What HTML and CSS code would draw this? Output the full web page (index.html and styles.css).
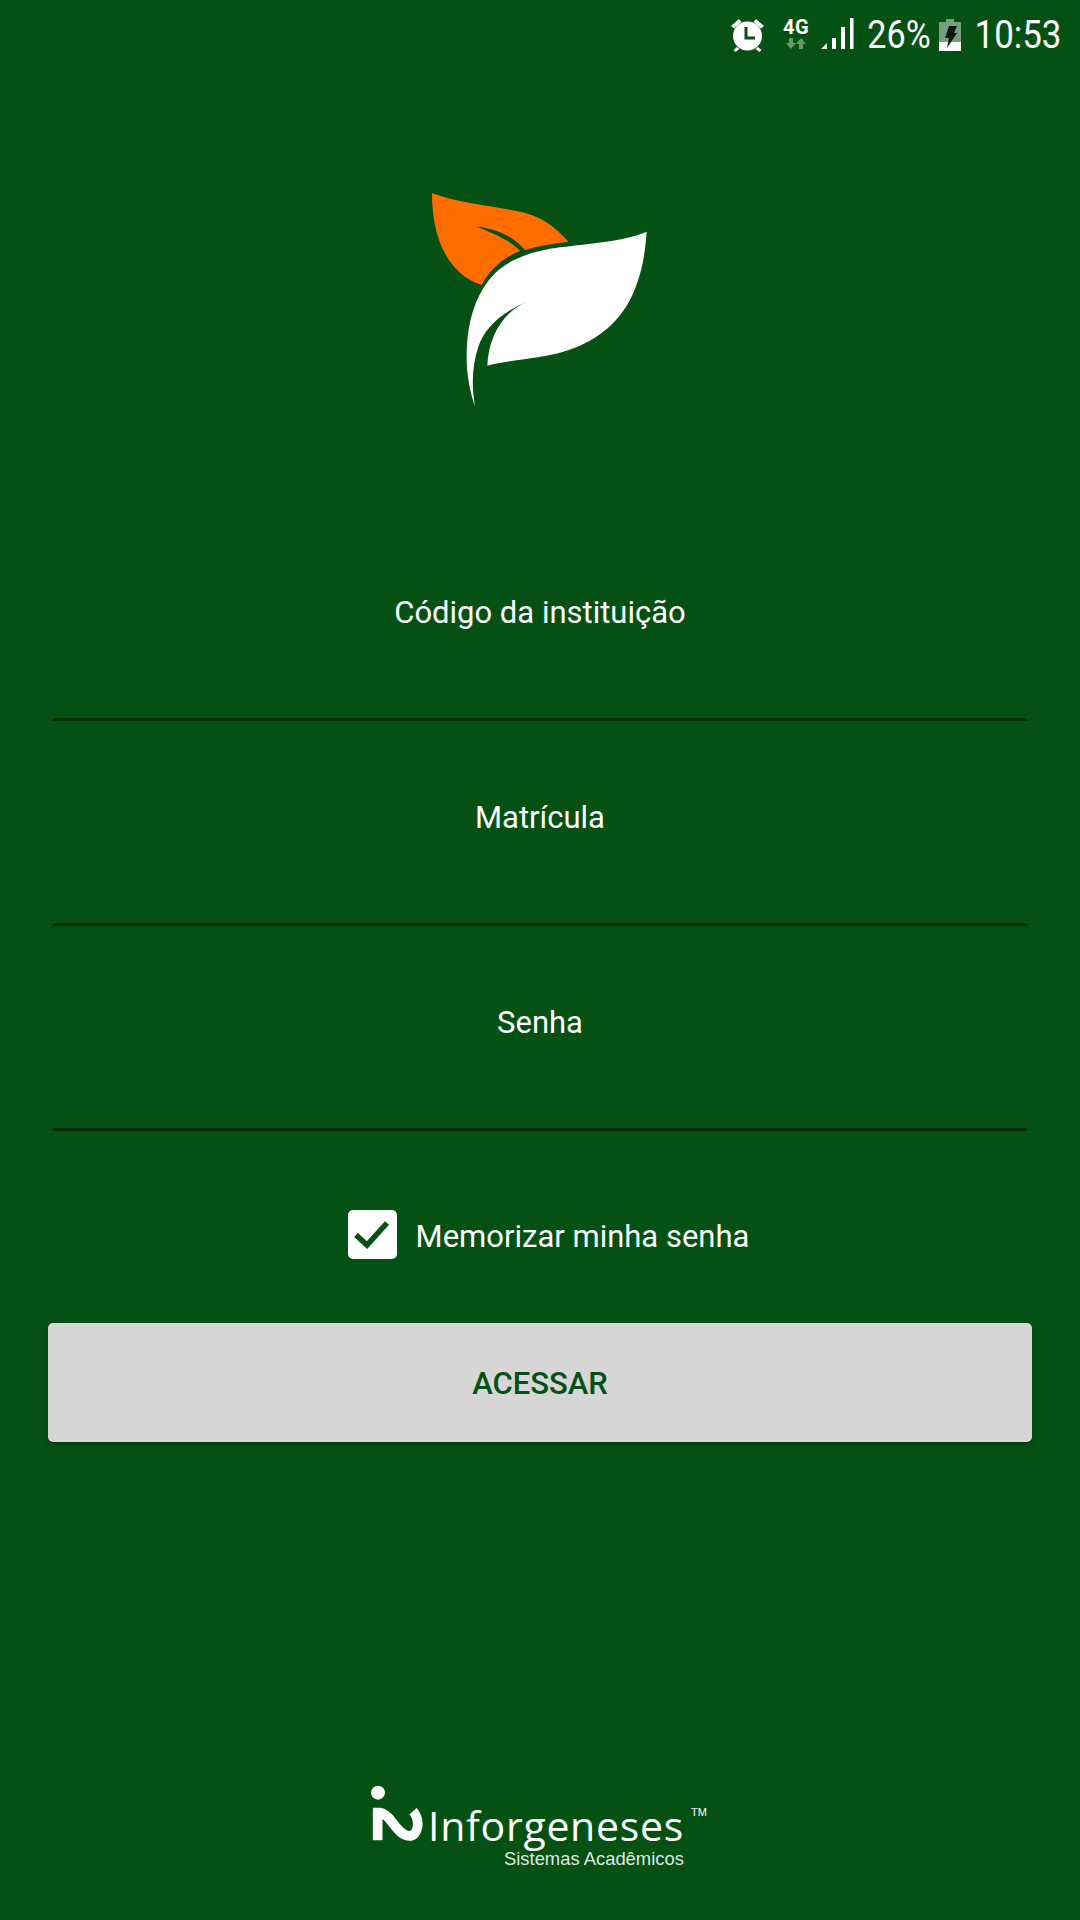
FILE: index.html
```html
<!DOCTYPE html>
<html lang="pt-BR">
<head>
    <meta charset="UTF-8">
    <meta name="viewport" content="width=device-width, initial-scale=1.0">
    <title>Login</title>
    <link rel="stylesheet" href="styles.css">
</head>
<body>
    <div class="status">
        <svg class="alarm" width="33" height="34" viewBox="0 0 33 34">
            <path d="M0 8 L8 1 L10.5 4 L3 10.5 Z M33 8 L25 1 L22.5 4 L30 10.5 Z M6 29 L2.5 32 L4.5 34 L8.5 31 Z M27 29 L30.5 32 L28.5 34 L24.5 31 Z" fill="#fff"/>
            <circle cx="16.5" cy="18" r="14.5" fill="#fff"/>
            <path d="M15 9 V20 H24" fill="none" stroke="#045113" stroke-width="3"/>
        </svg>
        <div class="net">
            <span class="net-label">4G</span>
            <svg width="20" height="13" viewBox="0 0 20 13">
                <path d="M3 1 H7 V6 H10 L5 12 L0 6 H3 Z M13 12 H17 V7 H20 L15 1 L10 7 H13 Z" fill="#fff" fill-opacity="0.4"/>
            </svg>
        </div>
        <svg class="signal" width="34" height="34" viewBox="0 0 34 34">
            <path d="M0 31 L6 25 V31 Z M11 20 H15 V31 H11 Z M20 9 H24 V31 H20 Z M29 0 H32.5 V31 H29 Z" fill="#fff"/>
        </svg>
        <span class="battery-pct">26%</span>
        <svg class="battery" width="22" height="32" viewBox="0 0 22 32">
            <path d="M7 0 H15 V3 H22 V23 H0 V3 H7 Z" fill="#fff" fill-opacity="0.45"/>
            <rect y="23" width="22" height="9" fill="#fff"/>
            <path d="M10 7 H18 L15 14 H18 L8 29 L10 19 H6 Z" fill="#0c1a10"/>
        </svg>
        <span class="clock">10:53</span>
    </div>

    <div class="logo">
        <svg width="260" height="250" viewBox="0 0 780 750">
            <path d="M66 70 C150 100 260 110 330 125 C400 140 440 175 475 215 C430 220 385 228 345 240 C310 200 260 175 200 170 C250 190 300 210 330 243 C275 265 240 300 215 345 C110 310 66 200 66 70 Z" fill="#ff6d00"/>
            <path d="M710 185 C640 215 540 220 450 232 C370 243 300 265 255 310 C205 360 180 430 172 510 C165 590 175 650 195 710 C185 650 185 590 205 530 C225 470 280 425 350 395 C280 425 235 500 232 587 C300 570 390 565 460 545 C550 520 620 465 660 390 C695 320 705 255 710 185 Z" fill="#fff"/>
        </svg>
    </div>

    <form class="login">
        <div class="field">Código da instituição</div>
        <div class="field">Matrícula</div>
        <div class="field">Senha</div>
        <div class="remember">
            <span class="checkbox">
                <svg width="36" height="30" viewBox="0 0 36 30">
                    <path d="M2 15 L13 25 L33 3" fill="none" stroke="#045113" stroke-width="5.5"/>
                </svg>
            </span>
            <span class="remember-label">Memorizar minha senha</span>
        </div>
        <button type="button" class="submit">ACESSAR</button>
    </form>

    <div class="brand">
        <svg class="brand-mark" width="60" height="75" viewBox="0 0 180 225">
            <circle cx="45" cy="50" r="21" fill="#fff"/>
            <path d="M44 100 V193 M30 110 H52 C85 115 100 178 138 180 C168 180 172 130 150 106" fill="none" stroke="#fff" stroke-width="29"/>
        </svg>
        <div class="brand-text">
            <div class="brand-name">Inforgeneses</div>
            <div class="brand-sub">Sistemas Acadêmicos</div>
            <span class="brand-tm">TM</span>
        </div>
    </div>
</body>
</html>
```

FILE: styles.css
```css
body {
    margin: 0;
    width: 1080px;
    height: 1920px;
    overflow: hidden;
    background-color: #045113;
    color: white;
    font-family: Roboto, sans-serif;
    display: flex;
    flex-direction: column;
}

/* barra de status */
.status {
    height: 70px;
    padding-right: 19px;
    display: flex;
    justify-content: flex-end;
    align-items: center;
    font-size: 39px;
}
.alarm {
    margin-right: 18px;
}
.net {
    width: 28px;
    margin-right: 11px;
    display: flex;
    flex-direction: column;
    align-items: center;
}
.net-label {
    font-size: 20px;
    font-weight: 700;
    line-height: 19px;
    letter-spacing: 0.5px;
    margin-top: -2px;
}
.signal {
    margin-right: 12px;
}
.battery-pct {
    width: 64px;
    margin-right: 8px;
    display: flex;
    justify-content: center;
    transform: scaleX(0.875);
    white-space: nowrap;
}
.battery {
    margin-right: 14px;
}
.clock {
    width: 86px;
    display: flex;
    justify-content: center;
    transform: scaleX(0.895);
    white-space: nowrap;
}

.logo {
    margin-top: 100px;
    height: 250px;
    display: flex;
    justify-content: center;
}

.login {
    margin-top: 96px;
    display: flex;
    flex-direction: column;
}
.field {
    height: 205px;
    box-sizing: border-box;
    margin: 0 53px;
    padding-top: 78px;
    border-bottom: 3px solid #022b08;
    text-align: center;
    font-size: 31px;
    line-height: 38px;
}
.remember {
    margin-top: 79px;
    padding-left: 17px;
    display: flex;
    justify-content: center;
    align-items: center;
    gap: 19px;
    font-size: 31px;
}
.remember-label {
    padding-top: 3px;
}
.checkbox {
    width: 49px;
    height: 49px;
    background: white;
    border-radius: 5px;
    display: flex;
    justify-content: center;
    align-items: center;
}
.submit {
    margin: 64px 48px 0;
    padding-top: 3px;
    height: 119px;
    background-color: #d5d6d5;
    color: #045113;
    border: none;
    border-radius: 5px;
    box-shadow: 0px 2px 4px rgba(0, 0, 0, 0.35);
    font-family: Roboto, sans-serif;
    font-size: 31px;
    font-weight: 500;
}

.brand {
    margin-top: auto;
    padding-bottom: 50px;
    padding-right: 33px;
    display: flex;
    justify-content: center;
    align-items: flex-start;
    gap: 5px;
}
.brand-mark {
    flex: none;
    margin-top: -16px;
}
.brand-text {
    position: relative;
    padding-top: 13px;
}
.brand-name {
    font-family: "Open Sans", sans-serif;
    font-size: 41px;
    line-height: 40px;
    letter-spacing: 0.7px;
}
.brand-sub {
    margin-top: 3px;
    text-align: right;
    font-family: "Liberation Sans", sans-serif;
    font-size: 18.4px;
    line-height: 22px;
    color: #dfe8e0;
}
.brand-tm {
    position: absolute;
    right: -23px;
    top: 14px;
    font-family: "Liberation Sans", sans-serif;
    font-size: 11px;
}
```
